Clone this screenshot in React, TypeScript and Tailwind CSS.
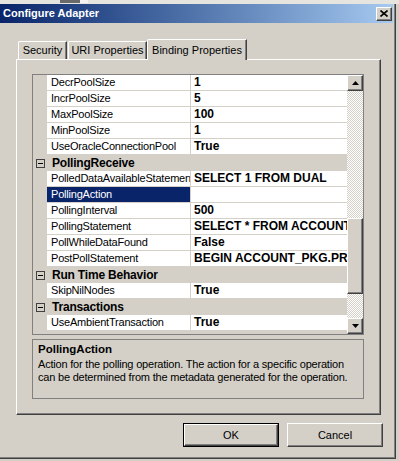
import React from "react";

type Row =
  | { kind: "prop"; name: string; value?: string; selected?: boolean }
  | { kind: "cat"; name: string };

const ROWS: Row[] = [
  { kind: "prop", name: "DecrPoolSize", value: "1" },
  { kind: "prop", name: "IncrPoolSize", value: "5" },
  { kind: "prop", name: "MaxPoolSize", value: "100" },
  { kind: "prop", name: "MinPoolSize", value: "1" },
  { kind: "prop", name: "UseOracleConnectionPool", value: "True" },
  { kind: "cat", name: "PollingReceive" },
  { kind: "prop", name: "PolledDataAvailableStatement", value: "SELECT 1 FROM DUAL" },
  { kind: "prop", name: "PollingAction", selected: true },
  { kind: "prop", name: "PollingInterval", value: "500" },
  { kind: "prop", name: "PollingStatement", value: "SELECT * FROM ACCOUNTACTIVITY" },
  { kind: "prop", name: "PollWhileDataFound", value: "False" },
  { kind: "prop", name: "PostPollStatement", value: "BEGIN ACCOUNT_PKG.PROCESS_ACTIVITY; END;" },
  { kind: "cat", name: "Run Time Behavior" },
  { kind: "prop", name: "SkipNilNodes", value: "True" },
  { kind: "cat", name: "Transactions" },
  { kind: "prop", name: "UseAmbientTransaction", value: "True" },
  { kind: "cat", name: "UDT .NET Type Generation - Design Time" },
];

// raised 3D face, windows classic
const RAISED =
  "bg-[#d4d0c8] border border-t-white border-l-white border-r-[#404040] border-b-[#404040] shadow-[inset_-1px_-1px_0_#808080]";

function Arrow({ down }: { down?: boolean }) {
  return (
    <svg width="7" height="4" viewBox="0 0 7 4">
      <path d={down ? "M0 0H7L3.5 4Z" : "M3.5 0L7 4H0Z"} fill="#000" />
    </svg>
  );
}

function CollapseBox() {
  return (
    <div className="w-[9px] h-[9px] border border-[#404040] bg-[#d4d0c8] flex items-center justify-center">
      <div className="w-[5px] h-px bg-black" />
    </div>
  );
}

function GridRow({ row }: { row: Row }) {
  if (row.kind === "cat") {
    return (
      <div className="flex items-center h-[16px] shrink-0 bg-[#d4d0c8]">
        <div className="w-[14px] flex justify-center pl-[1px]">
          <CollapseBox />
        </div>
        <div className="pl-[5px] text-[12px] font-bold tracking-[-0.2px] whitespace-nowrap leading-[15px]">
          {row.name}
        </div>
      </div>
    );
  }
  return (
    <div className="flex h-[16px] shrink-0">
      <div className="w-[14px] bg-[#d4d0c8]" />
      <div
        className={`w-[143px] pl-[4px] leading-[15px] tracking-[-0.2px] whitespace-nowrap overflow-hidden border-b border-[#d4d0c8] ${
          row.selected ? "bg-[#0a246a] text-white" : "bg-white"
        }`}
      >
        {row.name}
      </div>
      <div className="w-px bg-[#d4d0c8]" />
      <div className="w-[156px] pl-[3px] leading-[15px] text-[12px] font-bold whitespace-nowrap overflow-hidden border-b border-[#d4d0c8] bg-white">
        {row.value}
      </div>
    </div>
  );
}

function ScrollBar() {
  return (
    <div className="w-[16px] flex flex-col shrink-0">
      <div className={`h-[16px] flex items-center justify-center ${RAISED}`}>
        <Arrow />
      </div>
      <div className="h-[127px] bg-[repeating-conic-gradient(#ffffff_0_25%,#d4d0c8_0_50%)] bg-[length:2px_2px]" />
      <div className={`h-[76px] ${RAISED}`} />
      <div className="h-[24px] bg-[repeating-conic-gradient(#ffffff_0_25%,#d4d0c8_0_50%)] bg-[length:2px_2px]" />
      <div className={`h-[16px] flex items-center justify-center ${RAISED}`}>
        <Arrow down />
      </div>
    </div>
  );
}

export default function App() {
  return (
    <div className="w-[399px] h-[461px] bg-[#d4d0c8] overflow-hidden text-[11px] text-black font-['Liberation_Sans',Arial,sans-serif]">
      {/* window behind */}
      <div className="h-[4px] flex bg-[#e6e4de]">
        <div className="ml-[60px] w-[20px] h-[3px] bg-[#6a6a6a]" />
        <div className="w-[8px] h-[3px] bg-[#f4f4f4]" />
      </div>

      <div className="w-[396px] h-[455px] border-r border-b border-[#404040]">
        <div className="h-full border-r border-b border-[#808080] flex flex-col pr-px">
          {/* title bar */}
          <div className="h-[19px] shrink-0 flex items-center justify-between bg-gradient-to-r from-[#0a246a] to-[#a6caf0]">
            <span className="pl-[3px] text-white font-bold">Configure Adapter</span>
            <div className={`w-[16px] h-[14px] mr-px flex items-center justify-center ${RAISED}`}>
              <svg width="8" height="7" viewBox="0 0 8 7">
                <path d="M0.5 0.5L7.5 6.5M7.5 0.5L0.5 6.5" stroke="#000" strokeWidth="1.6" />
              </svg>
            </div>
          </div>

          {/* tabs */}
          <div className="mt-[14px] h-[22px] flex items-end pl-[18px] relative z-10">
            <div className="w-[49px] h-[18px] flex items-center justify-center border-t border-l border-white border-r border-r-[#404040] rounded-tl-[2px] shadow-[inset_-1px_0_0_#808080]">
              Security
            </div>
            <div className="ml-px w-[79px] h-[18px] flex items-center justify-center border-t border-l border-white border-r border-r-[#404040] rounded-tl-[2px] shadow-[inset_-1px_0_0_#808080]">
              URI Properties
            </div>
            <div className="w-[100px] h-[21px] -mb-px bg-[#d4d0c8] flex items-start pt-[2px] justify-center border-t border-l border-white border-r border-r-[#404040] rounded-tl-[2px] shadow-[inset_-1px_0_0_#808080]">
              Binding Properties
            </div>
          </div>

          {/* tab panel */}
          <div className="ml-[16px] w-[365px] h-[356px] border-t border-l border-white border-r border-b border-r-[#404040] border-b-[#404040] shadow-[inset_-1px_-1px_0_#808080] flex flex-col">
            <div className="mt-[14px] ml-[15px] w-[332px] h-[261px] border border-[#808080] flex overflow-hidden">
              <div className="w-[314px] flex flex-col overflow-hidden">
                {ROWS.map((r) => (
                  <GridRow key={r.name} row={r} />
                ))}
              </div>
              <ScrollBar />
            </div>

            <div className="mt-[4px] ml-[15px] w-[332px] h-[60px] border border-[#808080] px-[5px] pt-[2px] leading-[13px] whitespace-nowrap">
              <div className="font-bold text-[11.5px] leading-[14px]">PollingAction</div>
              <div className="mt-[2px] tracking-[-0.2px]">
                Action for the polling operation. The action for a specific operation
              </div>
              <div className="tracking-[-0.2px]">
                can be determined from the metadata generated for the operation.
              </div>
            </div>
          </div>

          {/* buttons */}
          <div className="mt-[8px] flex">
            <div className="ml-[183px] w-[96px] h-[24px] border border-black">
              <div className={`h-full flex items-center justify-center ${RAISED}`}>OK</div>
            </div>
            <div className={`ml-[8px] w-[96px] h-[24px] flex items-center justify-center ${RAISED}`}>
              Cancel
            </div>
          </div>
        </div>
      </div>
    </div>
  );
}
